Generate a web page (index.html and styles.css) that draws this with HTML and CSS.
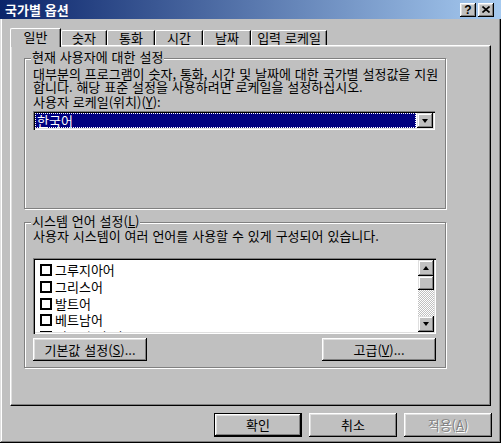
FILE: index.html
```html
<!DOCTYPE html>
<html>
<head>
  <meta charset="utf-8">
  <title>국가별 옵션</title>
  <link rel="stylesheet" href="styles.css">
</head>
<body>
  <div class="window">
    <div class="titlebar">
      <span class="title">국가별 옵션</span>
      <div class="title-buttons">
        <span class="tbtn tbtn-help">?</span>
        <span class="tbtn">
          <svg width="8" height="7" viewBox="0 0 8 7"><path d="M0.5 0.5 L7.5 6.5 M7.5 0.5 L0.5 6.5" stroke="#000" stroke-width="1.6" fill="none"/></svg>
        </span>
      </div>
    </div>

    <div class="dialog-body">
      <div class="tabs">
        <div class="tab active">일반</div>
        <div class="tab tab-narrow">숫자</div>
        <div class="tab">통화</div>
        <div class="tab">시간</div>
        <div class="tab">날짜</div>
        <div class="tab tab-wide">입력 로케일</div>
      </div>

      <div class="panel">
        <div class="group group-user">
          <span class="group-title">현재 사용자에 대한 설정</span>
          <p class="desc">대부분의 프로그램이 숫자, 통화, 시간 및 날짜에 대한 국가별 설정값을 지원<br>합니다. 해당 표준 설정을 사용하려면 로케일을 설정하십시오.</p>
          <div class="field-label">사용자 로케일(위치)(<u>Y</u>):</div>
          <div class="combo">
            <div class="combo-value">한국어</div>
            <div class="combo-button"><span class="arrow-down"></span></div>
          </div>
        </div>

        <div class="group group-system">
          <span class="group-title">시스템 언어 설정(<u>L</u>)</span>
          <p class="desc">사용자 시스템이 여러 언어를 사용할 수 있게 구성되어 있습니다.</p>
          <div class="listbox">
            <div class="list-items">
              <div class="list-item"><span class="check"></span>그루지아어</div>
              <div class="list-item"><span class="check"></span>그리스어</div>
              <div class="list-item"><span class="check"></span>발트어</div>
              <div class="list-item"><span class="check"></span>베트남어</div>
              <div class="list-item"><span class="check"></span>서유럽 및 미국</div>
            </div>
            <div class="scrollbar">
              <div class="sb-btn"><span class="arrow-up"></span></div>
              <div class="sb-thumb"></div>
              <div class="sb-track"></div>
              <div class="sb-btn"><span class="arrow-down"></span></div>
            </div>
          </div>
          <div class="group-buttons">
            <button class="btn btn-group">기본값 설정(<u>S</u>)...</button>
            <button class="btn btn-group">고급(<u>V</u>)...</button>
          </div>
        </div>
      </div>

      <div class="dialog-buttons">
        <button class="btn btn-dialog btn-default">확인</button>
        <button class="btn btn-dialog">취소</button>
        <button class="btn btn-dialog disabled">적용(<u>A</u>)</button>
      </div>
    </div>
  </div>
</body>
</html>
```

FILE: styles.css
```css
body {
  margin: 0;
  font-family: "Noto Sans CJK KR", "Noto Sans", sans-serif;
  font-size: 13px;
  line-height: 12px;
  word-spacing: 1px;
  color: #000;
  background: #c0c0c0;
}
.window {
  width: 501px;
  height: 443px;
  box-sizing: border-box;
  background: #c0c0c0;
  display: flex;
  flex-direction: column;
  box-shadow: inset -1px -1px #000, inset 1px 0 #dfdfdf, inset -2px -2px #808080, inset 2px 0 #fff;
}

/* title bar */
.titlebar {
  height: 19px;
  display: flex;
  align-items: center;
  justify-content: space-between;
  padding: 0 7px 0 5px;
  background: linear-gradient(to right, #0a246a, #a6caf0);
  color: #fff;
}
.title {
  font-weight: bold;
}
.title-buttons {
  display: flex;
  gap: 2px;
}
.tbtn {
  width: 16px;
  height: 14px;
  box-sizing: border-box;
  display: flex;
  align-items: center;
  justify-content: center;
  background: #c0c0c0;
  color: #000;
  box-shadow: inset -1px -1px #000, inset 1px 1px #fff, inset -2px -2px #808080, inset 2px 2px #dfdfdf;
}
.tbtn-help {
  font-family: "Liberation Sans", Arial, sans-serif;
  font-weight: bold;
  font-size: 12px;
}

.dialog-body {
  flex: 1;
  padding: 9px 10px 0 10px;
  display: flex;
  flex-direction: column;
}

/* tabs */
.tabs {
  display: flex;
  align-items: flex-end;
  height: 17px;
  position: relative;
  z-index: 1;
}
.tab {
  width: 48px;
  height: 15px;
  box-sizing: border-box;
  border-top: 1px solid #fff;
  border-left: 1px solid #fff;
  border-right: 1px solid #000;
  border-top-left-radius: 2px;
  box-shadow: inset -1px 0 #808080;
  text-align: center;
  line-height: 13px;
  background: #c0c0c0;
}
.tab-narrow {
  width: 46px;
}
.tab-wide {
  width: 76px;
}
.tab.active {
  width: 51px;
  height: 19px;
  margin-bottom: -2px;
  line-height: 15px;
}

.panel {
  width: 481px;
  height: 361px;
  box-sizing: border-box;
  border: 1px solid;
  border-color: #fff #000 #000 #fff;
  box-shadow: inset -1px -1px #808080, inset 1px 1px #dfdfdf;
  padding: 12px 0 0 13px;
}

/* group boxes */
.group {
  position: relative;
  width: 422px;
  box-sizing: border-box;
  border: 1px solid #808080;
  box-shadow: inset 1px 1px #fff, 1px 1px #fff;
}
.group-user {
  height: 151px;
  padding: 8px 0 0 8px;
}
.group-system {
  height: 146px;
  margin-top: 13px;
  padding: 6px 0 0 8px;
}
.group-title {
  position: absolute;
  top: -8px;
  left: 6px;
  padding: 0 1px;
  background: #c0c0c0;
}
.desc {
  margin: 0;
  line-height: 13px;
}
.field-label {
  margin-top: 3px;
}

/* combo box */
.combo {
  width: 402px;
  height: 19px;
  margin-top: 3px;
  box-sizing: border-box;
  padding: 2px;
  display: flex;
  background: #fff;
  box-shadow: inset 1px 1px #808080, inset 2px 2px #000, inset -1px -1px #fff, inset -2px -2px #dfdfdf;
}
.combo-value {
  flex: 1;
  margin-right: 1px;
  background: #000080;
  color: #fff;
  outline: 1px dotted #fff;
  outline-offset: -1px;
  padding-left: 2px;
  line-height: 15px;
}
.combo-button,
.sb-btn {
  width: 16px;
  box-sizing: border-box;
  display: flex;
  align-items: center;
  justify-content: center;
  background: #c0c0c0;
  box-shadow: inset -1px -1px #000, inset 1px 1px #dfdfdf, inset -2px -2px #808080, inset 2px 2px #fff;
}
.arrow-down,
.arrow-up {
  width: 0;
  height: 0;
  border-left: 3.5px solid transparent;
  border-right: 3.5px solid transparent;
}
.arrow-down {
  border-top: 4px solid #000;
}
.arrow-up {
  border-bottom: 4px solid #000;
}

/* list box */
.listbox {
  width: 403px;
  height: 76px;
  margin-top: 16px;
  box-sizing: border-box;
  padding: 2px;
  display: flex;
  overflow: hidden;
  background: #fff;
  box-shadow: inset 1px 1px #808080, inset 2px 2px #000, inset -1px -1px #fff, inset -2px -2px #dfdfdf;
}
.list-items {
  flex: 1;
  padding: 2px 0 0 5px;
  overflow: hidden;
}
.list-item {
  height: 16.7px;
  display: flex;
  align-items: center;
  gap: 3px;
  white-space: nowrap;
}
.check {
  width: 12px;
  height: 12px;
  box-sizing: border-box;
  border: 2px solid #000;
  background: #fff;
}
.scrollbar {
  width: 16px;
  display: flex;
  flex-direction: column;
}
.sb-btn {
  height: 16px;
}
.sb-thumb {
  height: 14px;
  background: #c0c0c0;
  box-shadow: inset -1px -1px #000, inset 1px 1px #dfdfdf, inset -2px -2px #808080, inset 2px 2px #fff;
}
.sb-track {
  flex: 1;
  background: repeating-conic-gradient(#c0c0c0 0 25%, #fff 0 50%) 0 0 / 2px 2px;
}

/* buttons */
.btn {
  box-sizing: border-box;
  border: 0;
  padding: 0;
  font: inherit;
  word-spacing: inherit;
  color: #000;
  background: #c0c0c0;
  display: flex;
  align-items: center;
  justify-content: center;
  box-shadow: inset -1px -1px #000, inset 1px 1px #fff, inset -2px -2px #808080, inset 2px 2px #dfdfdf;
}
.group-buttons {
  width: 403px;
  margin-top: 4px;
  display: flex;
  justify-content: space-between;
}
.btn-group {
  width: 114px;
  height: 23px;
}
.dialog-buttons {
  display: flex;
  justify-content: flex-end;
  gap: 7px;
  margin-top: 7px;
  margin-right: -1px;
}
.btn-dialog {
  width: 88px;
  height: 24px;
}
.btn-default {
  border: 1px solid #000;
}
.disabled {
  color: #808080;
  text-shadow: 1px 1px #fff;
}
```
